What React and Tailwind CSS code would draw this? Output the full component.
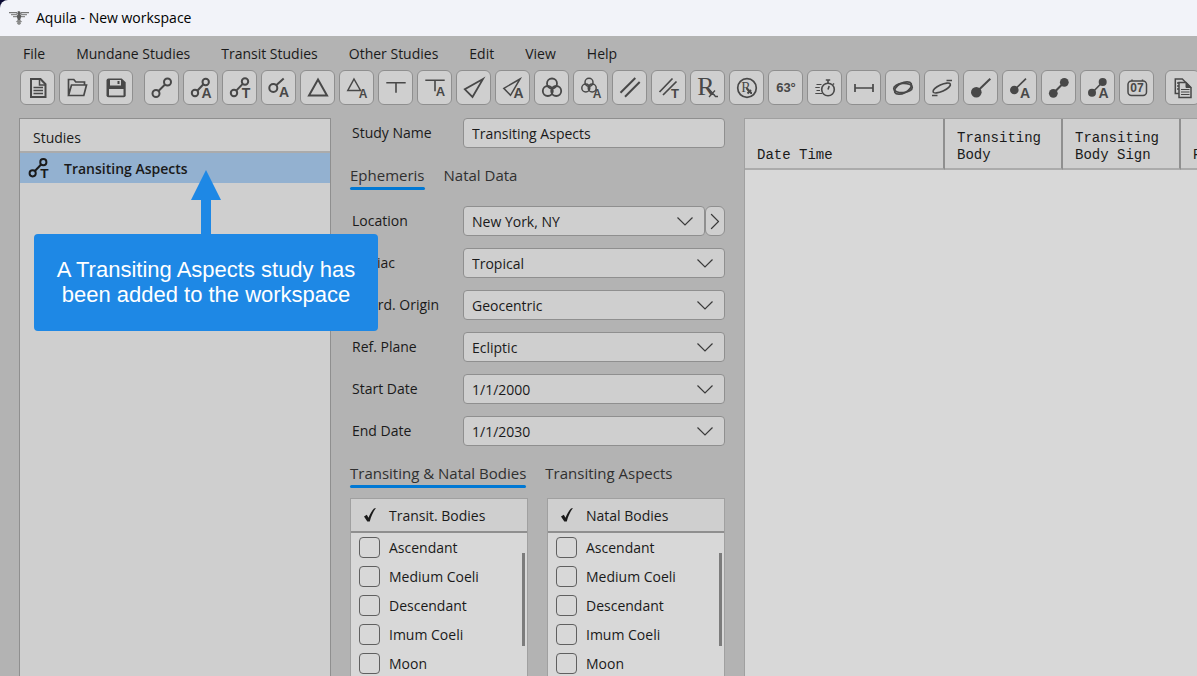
import { useState } from "react";

const MENUS = ["File", "Mundane Studies", "Transit Studies", "Other Studies", "Edit", "View", "Help"];

const BODIES = ["Ascendant", "Medium Coeli", "Descendant", "Imum Coeli", "Moon"];

const COLUMNS = ["Date Time", "Transiting Body", "Transiting Body Sign", "Phase"];

function Letter({ children, x = 22, y = 27, size = 14 }) {
  return (
    <text
      x={x}
      y={y}
      fontSize={size}
      textAnchor="middle"
      fill="currentColor"
      stroke="none"
      className="font-['Liberation_Sans',sans-serif] font-bold"
    >
      {children}
    </text>
  );
}

function Serif({ children, x, y, size }) {
  return (
    <text
      x={x}
      y={y}
      fontSize={size}
      textAnchor="middle"
      fill="currentColor"
      stroke="none"
      className="font-['Liberation_Serif',serif]"
    >
      {children}
    </text>
  );
}

const LinkT = () => (
  <>
    <circle cx="11" cy="22" r="3.2" />
    <circle cx="22" cy="10.5" r="3.2" />
    <path d="M13.3 19.6 19.7 12.9" />
    <Letter x={23}>T</Letter>
  </>
);

const GROUPS = [
  [
    {
      label: "New",
      art: (
        <>
          <path d="M10 8h9.5l5 5.2V26H10z" />
          <path d="M18.5 8v6h6M12.5 16.5H22M12.5 19.5H22M12.5 22.5H22" strokeWidth="1.5" />
        </>
      ),
    },
    {
      label: "Open",
      art: <path d="M8.5 24.5V8.5h5.3l2 2.5h8.7v3M8.5 24.5l3-10.5h15l-2.7 10.5z" strokeWidth="1.7" />,
    },
    {
      label: "Save",
      art: (
        <>
          <path
            d="M9.5 7.5h13.2l4 3.8v13a2 2 0 0 1-2 2H9.5a2 2 0 0 1-2-2V9.5a2 2 0 0 1 2-2z"
            fill="currentColor"
            stroke="none"
          />
          <path d="M11 9h11v5.5H11zM10 18h14.5v6.5H10z" fill="#cfcfcf" stroke="none" />
          <path d="M19.5 10v3" />
        </>
      ),
    },
  ],
  [
    {
      label: "Aspects",
      art: (
        <>
          <circle cx="11" cy="22.5" r="3.5" />
          <circle cx="22.5" cy="11" r="3.5" />
          <path d="M13.5 20 20 13.5" />
        </>
      ),
    },
    {
      label: "Aspects to Angles",
      art: (
        <>
          <circle cx="11" cy="22" r="3.2" />
          <circle cx="21.7" cy="11" r="3.2" />
          <path d="M13.3 19.7 19.4 13.3" />
          <Letter x={22.5}>A</Letter>
        </>
      ),
    },
    { label: "Transiting Aspects", art: <LinkT /> },
    {
      label: "Aspect to Angle",
      art: (
        <>
          <circle cx="11.3" cy="17" r="4" />
          <path d="M14.2 14.2 21.7 7.5" />
          <Letter y={26}>A</Letter>
        </>
      ),
    },
    { label: "Triangle", art: <path d="M17 8.5 26 24.5H8z" /> },
    {
      label: "Triangle to Angle",
      art: (
        <>
          <path d="M14 8 20.5 19.5H7.8z" strokeWidth="1.5" />
          <Letter x={23} size={12}>A</Letter>
        </>
      ),
    },
    { label: "T-Square", art: <path d="M7.3 11.7h19.4M17 11.7v10" strokeWidth="1.6" /> },
    {
      label: "T-Square to Angle",
      art: (
        <>
          <path d="M7.3 9.3h19.4M17 9.3v11" strokeWidth="1.6" />
          <Letter x={22.5} y={25} size={13}>A</Letter>
        </>
      ),
    },
    { label: "Kite", art: <path d="M26 8 7.8 18.3l7.7 7.7z" strokeWidth="1.8" /> },
    {
      label: "Kite to Angle",
      art: (
        <>
          <path d="M24 8 7.8 17.3l6.7 7z" strokeWidth="1.5" />
          <Letter x={22.5}>A</Letter>
        </>
      ),
    },
    {
      label: "Midpoints",
      art: (
        <g strokeWidth="1.8">
          <circle cx="17" cy="12.5" r="5" />
          <circle cx="12.8" cy="20" r="5" />
          <circle cx="21.2" cy="20" r="5" />
        </g>
      ),
    },
    {
      label: "Midpoints to Angle",
      art: (
        <>
          <g strokeWidth="1.5">
            <circle cx="15" cy="11.3" r="4" />
            <circle cx="11.8" cy="17" r="4" />
            <circle cx="18.2" cy="17" r="4" />
          </g>
          <Letter x={23} size={12}>A</Letter>
        </>
      ),
    },
    { label: "Parallels", art: <path d="M7.5 21.7 22.3 7M12 25.7 26.7 11" /> },
    {
      label: "Transiting Parallels",
      art: (
        <>
          <path d="M7.5 21 20.5 7.5M11 24 24.5 10.5" strokeWidth="1.7" />
          <Letter x={23} size={13}>T</Letter>
        </>
      ),
    },
    {
      label: "Retrogrades",
      art: (
        <>
          <Serif x={15} y={24} size={26}>R</Serif>
          <path d="m17 17 7.500 8.500h2.500M24 19.500 18 26" strokeWidth="1.300" />
        </>
      ),
    },
    {
      label: "Retrograde Returns",
      art: (
        <>
          <circle cx="17" cy="17" r="9.3" strokeWidth="1.7" />
          <Serif x={16} y={21} size={14}>R</Serif>
          <path d="m16.5 17 4.500 5H22M21 19l-3.500 3.500" />
        </>
      ),
    },
    { label: "Degrees", art: <Letter x={17} y={21} size={13}>63°</Letter> },
    {
      label: "Speed",
      art: (
        <>
          <circle cx="20" cy="18.5" r="6.3" strokeWidth="1.6" />
          <path d="M17.8 9h4.4M20 9v3M25 12.5l1 1M20 18.5l1.2-3.5" strokeWidth="1.6" />
          <path d="M8.5 13.5h5M7.3 16.5h4.5M8.5 19.5H12M7.3 22.5h7" strokeWidth="1.1" />
        </>
      ),
    },
    { label: "Distance", art: <path d="M8 17h18M8 13v8M26 13v8" strokeWidth="1.7" /> },
    {
      label: "Orbits",
      art: (
        <g strokeWidth="1.7">
          <ellipse cx="17" cy="17" rx="9.3" ry="5" transform="rotate(-28 17 17)" />
          <ellipse cx="17" cy="17" rx="9.3" ry="4.6" transform="rotate(-4 17 17)" />
        </g>
      ),
    },
    {
      label: "Orbit Extremes",
      art: (
        <>
          <ellipse cx="16.7" cy="17" rx="9.5" ry="3.3" transform="rotate(-25 16.7 17)" strokeWidth="1.7" />
          <path d="M21.5 9.5H27M7 24.5h5.5" strokeWidth="1.4" />
        </>
      ),
    },
    {
      label: "Ingress",
      art: (
        <>
          <circle cx="12.3" cy="21.3" r="5.3" fill="currentColor" stroke="none" />
          <path d="M12.3 21.3 26.3 7.7" />
        </>
      ),
    },
    {
      label: "Ingress to Angle",
      art: (
        <>
          <circle cx="11.3" cy="19" r="4.3" fill="currentColor" stroke="none" />
          <path d="M11.3 19 23 7.7" strokeWidth="1.7" />
          <Letter>A</Letter>
        </>
      ),
    },
    {
      label: "Conjunctions",
      art: (
        <>
          <g fill="currentColor" stroke="none">
            <circle cx="11.3" cy="22.3" r="4.4" />
            <circle cx="22.3" cy="11.3" r="4.4" />
          </g>
          <path d="m11.3 22.3 11-11" />
        </>
      ),
    },
    {
      label: "Conjunctions to Angle",
      art: (
        <>
          <g fill="currentColor" stroke="none">
            <circle cx="11" cy="21.7" r="4" />
            <circle cx="21.7" cy="11" r="4" />
          </g>
          <path d="M11 21.7 21.7 11" strokeWidth="1.6" />
          <Letter x={22.5}>A</Letter>
        </>
      ),
    },
    {
      label: "Calendar",
      art: (
        <>
          <rect x="8" y="10" width="18.5" height="14.5" rx="3.5" strokeWidth="1.5" />
          <path d="M12 8.5V10M22.5 8.5V10" strokeWidth="1.5" />
          <Letter x={17} y={21} size={12}>07</Letter>
        </>
      ),
    },
  ],
  [
    {
      label: "Copy",
      art: (
        <>
          <path d="M9.3 8h7l3 3v11.5h-10zM11 12h4M11 15h4M11 18h4" strokeWidth="1.5" />
          <path d="M13 11.5h7l5 5v10H13z" fill="#cfcfcf" strokeWidth="1.5" />
          <path d="M20 11.5v5h5z" fill="currentColor" strokeWidth="1" />
          <path d="M15 18.5h8.5M15 21h8.5M15 23.5h8.5" strokeWidth="1.2" />
        </>
      ),
    },
  ],
];

function Glyph({ children, className }) {
  return (
    <svg viewBox="0 0 33 33" fill="none" stroke="currentColor" strokeWidth="2" className={className} aria-hidden="true">
      {children}
    </svg>
  );
}

function Chevron({ className = "" }) {
  return (
    <svg
      viewBox="0 0 16 9"
      fill="none"
      stroke="currentColor"
      strokeWidth="1.2"
      className={`h-[9px] w-4 text-[#3a3a3a] ${className}`}
      aria-hidden="true"
    >
      <path d="m.5.5 7.500 7.500L15.500.5" />
    </svg>
  );
}

function EagleLogo() {
  return (
    <svg viewBox="0 0 20 14" className="h-3.5 w-5" aria-hidden="true">
      <g fill="none" stroke="#8a8a8a" strokeWidth="1.2">
        <path d="M0 1.600h7.500l1 1.400M20 1.600h-7.500l-1 1.400" stroke="#777777" />
        <path d="M2 3.700h6M18 3.700h-6M4 5.700h4.500M16 5.700h-4.500" />
      </g>
      <path d="M8.300.8 10 0l1.500 1v2.500l.8 1.500L11.200 9h-2.400L7.700 5l1-1.500V1.200z" fill="#5c5c5c" />
      <path d="M8.600 9h2.800l1.800 2-1.700.2.5 1.600L10 14l-2-1.200.5-1.600-1.700-.2z" fill="#8a8a8a" />
    </svg>
  );
}

function Toolbar() {
  return (
    <div className="flex shrink-0 gap-[11px] overflow-hidden pl-5" role="toolbar">
      {GROUPS.map((group, i) => (
        <div key={i} className="flex shrink-0 gap-1">
          {group.map(({ label, art }) => (
            <button
              key={label}
              aria-label={label}
              title={label}
              className="size-[35px] shrink-0 rounded-md border border-[#8f8f8f] bg-[#cfcfcf] text-[#484848] hover:bg-[#dadada]"
            >
              <Glyph className="size-[33px]">{art}</Glyph>
            </button>
          ))}
        </div>
      ))}
    </div>
  );
}

function StudiesPanel() {
  return (
    <section className="relative w-[312px] shrink-0 border border-b-0 border-[#8f8f8f] bg-[#cfcfcf]">
      <h2 className="h-[34px] border-b-2 border-[#ababab] pl-[13px] leading-[38px]">Studies</h2>
      <button className="flex h-[30px] w-full items-center gap-2.5 bg-[#93b1d0] pl-0.5 font-semibold text-[#1a1a1a]">
        <Glyph className="size-8">
          <LinkT />
        </Glyph>
        Transiting Aspects
      </button>

      <div className="absolute top-[51px] left-3.5 z-10 flex w-[344px] flex-col items-center" role="status">
        <svg viewBox="0 0 30 64" className="h-16 w-[30px] text-[#1e88e5]" fill="currentColor" aria-hidden="true">
          <path d="M15 0 30 30H20v34H10V30H0z" />
        </svg>
        <p className="w-full rounded bg-[#1e88e5] px-4 pt-[23px] pb-6 text-center font-['Liberation_Sans',sans-serif] text-[22px] leading-[25px] text-white">
          A Transiting Aspects study has been added to the workspace
        </p>
      </div>
    </section>
  );
}

function Tabs({ items }) {
  const [active, setActive] = useState(items[0]);

  return (
    <div className="mt-4 flex h-[26px] gap-[19px]" role="tablist">
      {items.map((item) => (
        <button
          key={item}
          role="tab"
          aria-selected={item === active}
          onClick={() => setActive(item)}
          className={`flex flex-col justify-between text-[15px] leading-[22px] text-[#303030] after:h-[3px] after:w-full after:rounded-full ${
            item === active ? "after:bg-[#0078d4]" : "after:bg-transparent"
          }`}
        >
          {item}
        </button>
      ))}
    </div>
  );
}

const FIELD = "h-[30px] w-full rounded border border-[#8f8f8f] bg-[#cfcfcf] px-2 pt-px outline-none";

function Field({ id, label, children }) {
  return (
    <div className="flex">
      <label htmlFor={id} className="w-[113px] shrink-0 pl-0.5 leading-[30px]">
        {label}
      </label>
      <div className="flex min-w-0 flex-1">{children}</div>
    </div>
  );
}

function Select({ id, value }) {
  return (
    <div className="relative flex-1">
      <select id={id} className={`${FIELD} appearance-none`} defaultValue={value}>
        <option>{value}</option>
      </select>
      <Chevron className="pointer-events-none absolute top-[11px] right-3" />
    </div>
  );
}

function DateField({ id, value }) {
  return (
    <div className="relative flex-1">
      <input id={id} type="text" defaultValue={value} className={FIELD} />
      <button aria-label="Open calendar" className="absolute top-[11px] right-3">
        <Chevron />
      </button>
    </div>
  );
}

function BodyList({ title, prefix }) {
  return (
    <div
      role="group"
      aria-label={title}
      className="relative min-w-0 flex-1 border border-b-0 border-[#a0a0a0] bg-[#d8d8d8]"
    >
      <div className="flex h-[34px] items-center border-b-2 border-[#8f8f8f] bg-[#cfcfcf]">
        <svg viewBox="0 0 12 14" className="ml-[13px] h-3.5 w-3 text-[#1a1a1a]" fill="currentColor" aria-hidden="true">
          <path d="M0 8.500 2.800 6.800l1.700 3C6 6 8 2.500 10 .5L12 0C9 4 7 8.500 5.800 13.500H3.300z" />
        </svg>
        <span className="ml-[13px]">{title}</span>
      </div>
      <ul>
        {BODIES.map((body) => {
          const id = `${prefix}-${body}`;
          return (
            <li key={body} className="flex h-[29px] items-center pl-2">
              <input
                id={id}
                type="checkbox"
                className="size-[21px] appearance-none rounded border border-[#606060] checked:bg-[#0078d4]"
              />
              <label htmlFor={id} className="pl-[9px]">
                {body}
              </label>
            </li>
          );
        })}
      </ul>
      <div className="absolute top-[54px] right-0.5 h-[93px] w-[3px] bg-[#7c7c7c]" aria-hidden="true" />
    </div>
  );
}

function StudyForm() {
  return (
    <section className="w-[375px] shrink-0">
      <Field id="study-name" label="Study Name">
        <input id="study-name" type="text" defaultValue="Transiting Aspects" className={FIELD} />
      </Field>

      <Tabs items={["Ephemeris", "Natal Data"]} />

      <div className="mt-4 flex flex-col gap-3">
        <Field id="location" label="Location">
          <Select id="location" value="New York, NY" />
          <button
            aria-label="Edit location"
            className="flex w-5 items-center justify-center rounded-md border border-[#8f8f8f] bg-[#cfcfcf]"
          >
            <Chevron className="shrink-0 -rotate-90" />
          </button>
        </Field>
        <Field id="zodiac" label="Zodiac">
          <Select id="zodiac" value="Tropical" />
        </Field>
        <Field id="origin" label="Coord. Origin">
          <Select id="origin" value="Geocentric" />
        </Field>
        <Field id="plane" label="Ref. Plane">
          <Select id="plane" value="Ecliptic" />
        </Field>
        <Field id="start" label="Start Date">
          <DateField id="start" value="1/1/2000" />
        </Field>
        <Field id="end" label="End Date">
          <DateField id="end" value="1/1/2030" />
        </Field>
      </div>

      <Tabs items={["Transiting & Natal Bodies", "Transiting Aspects"]} />

      <div className="mt-2.5 flex gap-[19px]">
        <BodyList title="Transit. Bodies" prefix="transit" />
        <BodyList title="Natal Bodies" prefix="natal" />
      </div>
    </section>
  );
}

function ResultsTable() {
  return (
    <section className="min-w-0 flex-1 overflow-hidden border-t border-l border-[#a0a0a0] bg-[#d8d8d8]">
      <table className="w-[554px] table-fixed border-separate border-spacing-0 font-['Liberation_Mono',monospace] text-[14px] leading-[17px]">
        <colgroup>
          <col className="w-[200px]" />
          <col className="w-[118px]" />
          <col className="w-[118px]" />
          <col className="w-[118px]" />
        </colgroup>
        <thead>
          <tr className="h-[51px] bg-[#cfcfcf] text-left">
            {COLUMNS.map((column) => (
              <th
                key={column}
                className="border-r-2 border-b-2 border-r-[#8f8f8f] border-b-[#ababab] pr-2 pb-1 pl-3 align-bottom font-normal"
              >
                {column}
              </th>
            ))}
          </tr>
        </thead>
      </table>
    </section>
  );
}

export default function App() {
  return (
    <div className="flex h-screen flex-col overflow-hidden bg-[#b3b3b3] font-['Open_Sans',sans-serif] text-[14px] text-[#1a1a1a]">
      <div className="shrink-0 bg-[#0b0b33]">
        <header className="flex h-9 items-center gap-[7px] rounded-tl-lg bg-[#f2f3f9] pl-[9px] text-black">
          <EagleLogo />
          <h1 className="leading-9">Aquila - New workspace</h1>
        </header>
      </div>

      <nav className="flex h-[34px] shrink-0 items-center gap-[31px] pl-[23px]">
        {MENUS.map((menu) => (
          <button key={menu}>{menu}</button>
        ))}
      </nav>

      <Toolbar />

      <main className="mt-[13px] flex min-h-0 flex-1 gap-[19px] pl-[19px]">
        <StudiesPanel />
        <StudyForm />
        <ResultsTable />
      </main>
    </div>
  );
}
